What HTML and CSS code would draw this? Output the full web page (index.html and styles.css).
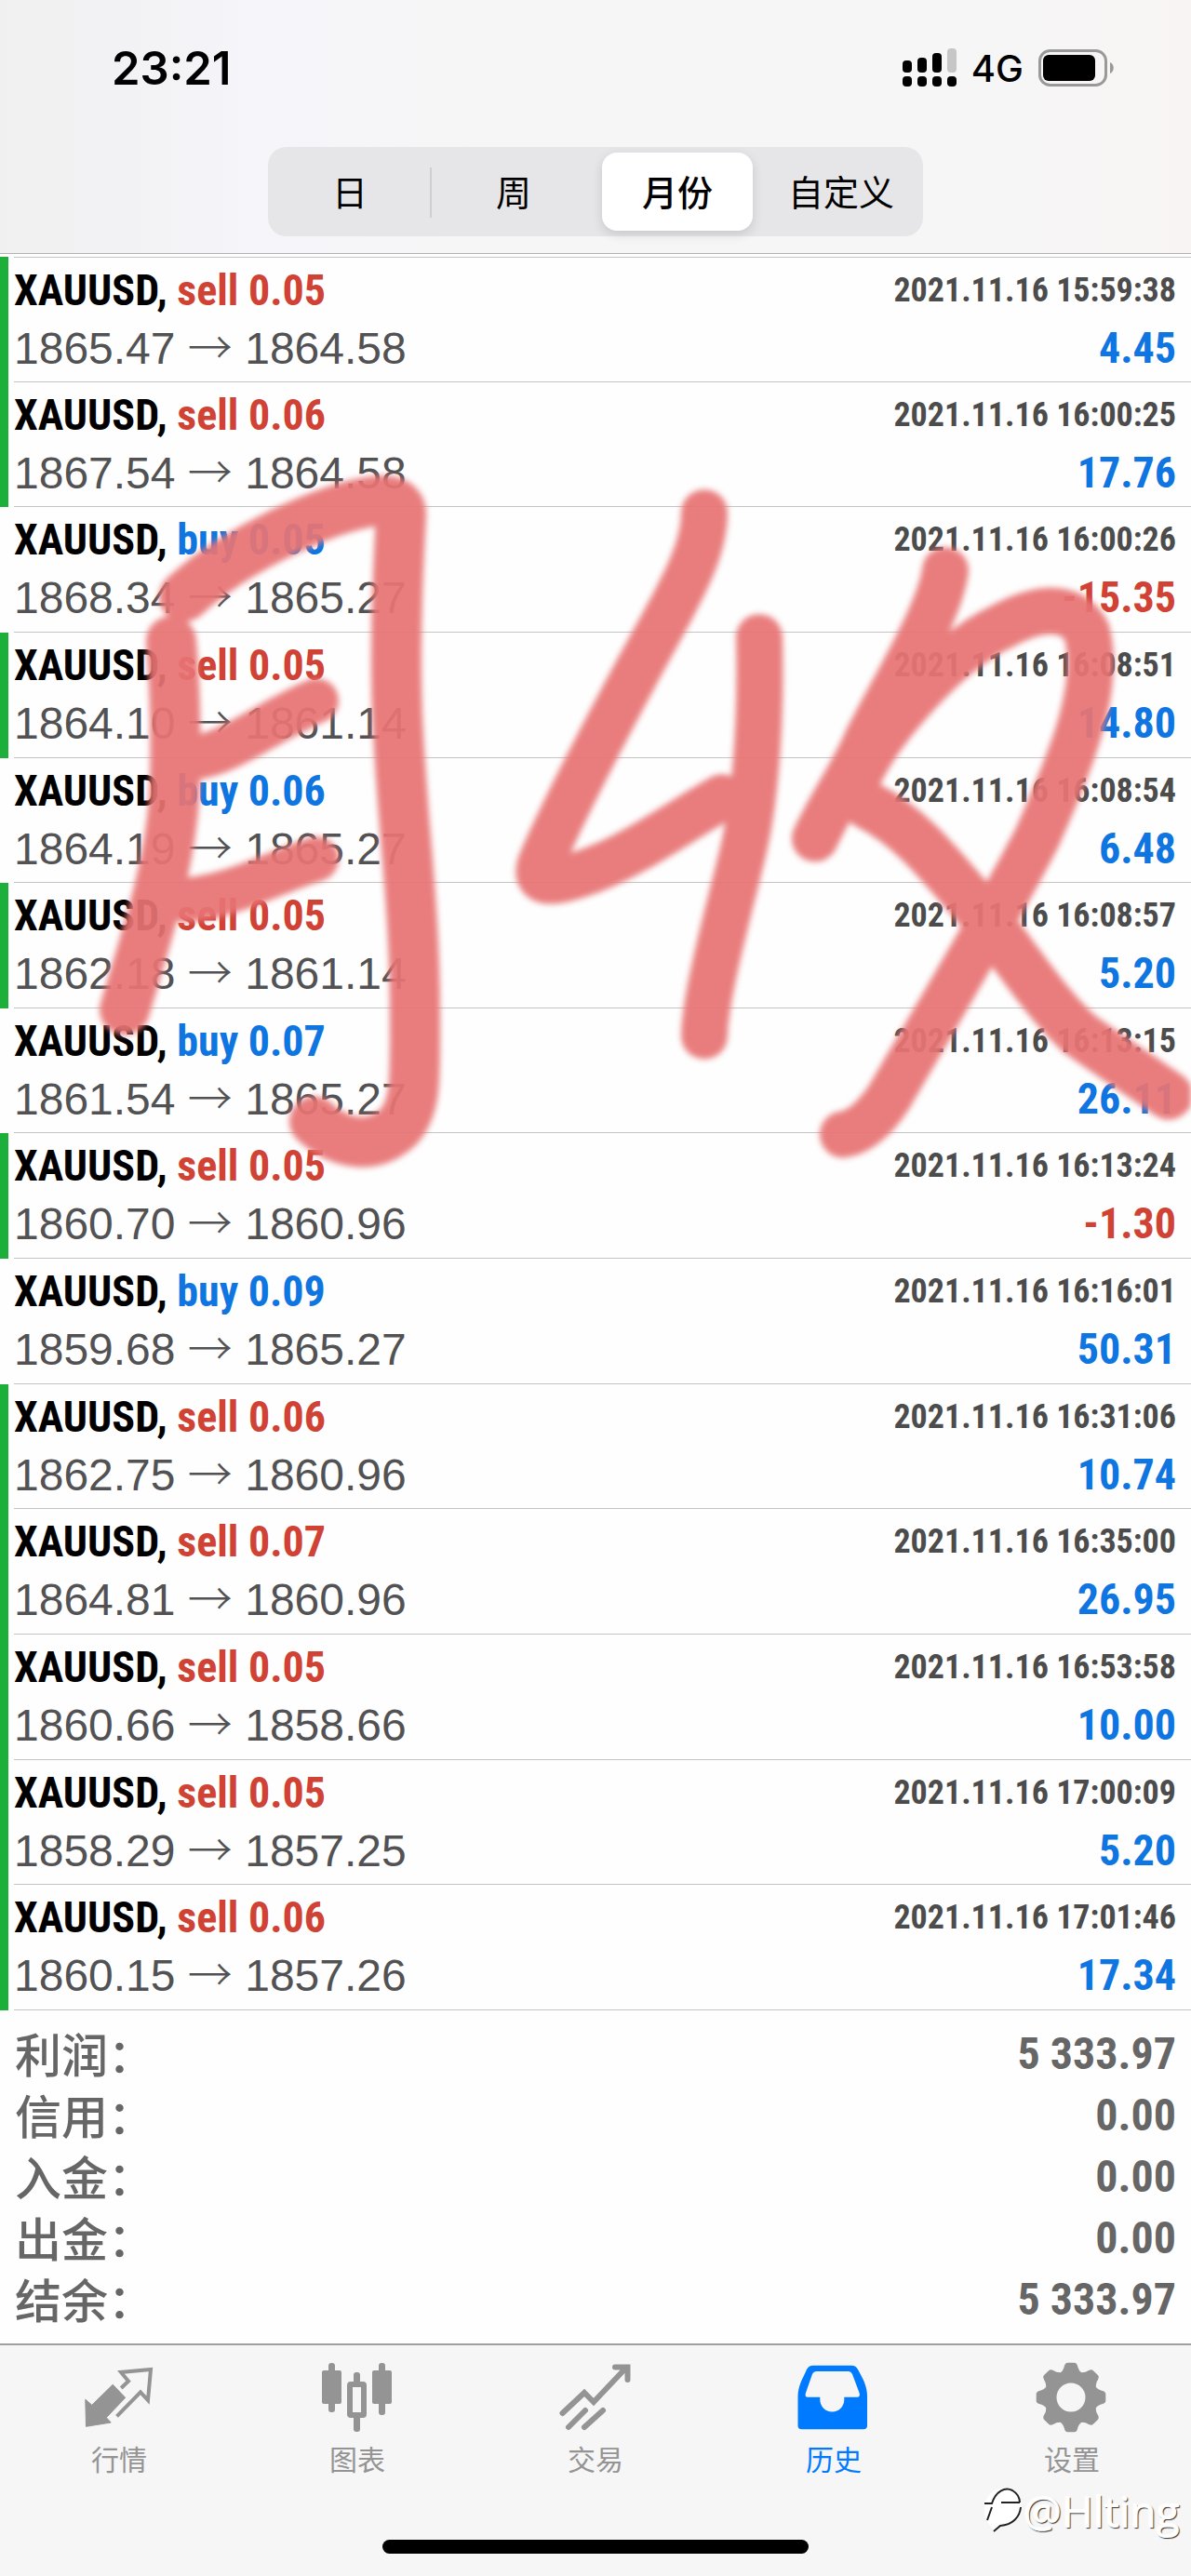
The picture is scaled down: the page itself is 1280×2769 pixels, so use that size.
FILE: index.html
```
<!DOCTYPE html>
<html lang="zh-CN">

<head>
   <meta charset="UTF-8">
   <meta name="viewport" content="width=device-width, initial-scale=1.0">
   <title>历史</title>
   <link rel="stylesheet" href="styles.css">
</head>

<body>
   <header class="top">
      <div class="status-bar">
         <span class="clock">23:21</span>
         <div class="status-icons">
            <svg class="signal" viewBox="0 0 58 42">
               <rect x="0" y="13" width="10" height="13" rx="4" />
               <rect x="16" y="10" width="10" height="16" rx="4" />
               <rect x="32" y="5" width="10" height="21" rx="4" />
               <rect x="48" y="0" width="10" height="26" rx="4" fill="#c6c6c6" />
               <rect x="0" y="30" width="10" height="11" rx="4" />
               <rect x="16" y="30" width="10" height="11" rx="4" />
               <rect x="32" y="30" width="10" height="11" rx="4" />
               <rect x="48" y="30" width="10" height="11" rx="4" />
            </svg>
            <span class="network">4G</span>
            <svg class="battery" viewBox="0 0 82 40">
               <rect x="1.5" y="1.5" width="71" height="37" rx="11" fill="none" stroke="#999" stroke-width="3" />
               <rect x="5" y="6" width="56" height="28" rx="6" />
               <path d="M77 14c5 2 5 10 0 12z" fill="#999" />
            </svg>
         </div>
      </div>
      <nav class="segments">
         <button class="segment" type="button">日</button>
         <button class="segment" type="button">周</button>
         <button class="segment active" type="button">月份</button>
         <button class="segment" type="button">自定义</button>
      </nav>
   </header>

   <main class="history">
      <div class="list-wrap">
         <ul class="trades" id="trades"></ul>
         <svg class="scribble" viewBox="0 277 1280 1884" preserveAspectRatio="none">
            <path d="M184 690C190 760 190 850 184 888C178 940 160 1000 134 1086" />
            <path d="M198 642C245 598 327 558 380 544C420 534 432 540 431 556C426 640 424 720 428 790C434 900 446 980 446 1092C446 1160 448 1190 428 1212C400 1238 364 1230 338 1206" />
            <path d="M208 815C245 812 290 775 340 754" stroke-width="48" />
            <path d="M200 968C250 964 290 940 340 924" stroke-width="48" />
            <path d="M757 552C757 590 735 630 714 669C680 730 610 860 581 929C572 955 600 950 641 934C690 914 730 884 776 858" stroke-width="50" />
            <path d="M816 686C818 760 814 850 799 914C786 970 758 1067 757 1114" stroke-width="50" />
            <path d="M1016 614C1010 660 960 740 932 796C918 830 890 870 876 902" stroke-width="50" />
            <path d="M925 830C950 780 1020 700 1077 674C1110 656 1150 646 1168 680C1184 740 1150 820 1116 898C1080 970 990 1120 956 1179C940 1204 922 1218 906 1220" stroke-width="50" />
            <path d="M932 866C980 890 1010 930 1053 980C1090 1025 1120 1075 1160 1112C1200 1140 1230 1160 1256 1178" stroke-width="52" />
         </svg>
      </div>

      <dl class="summary">
         <div class="total"><dt>利润：</dt><dd>5 333.97</dd></div>
         <div class="total"><dt>信用：</dt><dd>0.00</dd></div>
         <div class="total"><dt>入金：</dt><dd>0.00</dd></div>
         <div class="total"><dt>出金：</dt><dd>0.00</dd></div>
         <div class="total"><dt>结余：</dt><dd>5 333.97</dd></div>
      </dl>
   </main>

   <footer class="bottom">
      <nav class="tabs">
         <a class="tab" href="#quotes">
            <svg viewBox="0 0 80 80">
               <path d="M3.8 43.3L10.8 49.3L33.2 27.3L46.7 41.3L26.3 62.7L31.2 68L4.5 72.3z" stroke="currentColor" stroke-width="1" stroke-linejoin="round" />
               <path d="M42.2 31L50 23.5L42 14L74 11L71 44L63 35.3L37.5 61.3" fill="none" stroke="currentColor" stroke-width="4" />
            </svg>
            <span>行情</span>
         </a>
         <a class="tab" href="#charts">
            <svg viewBox="0 0 80 80">
               <rect x="2" y="12" width="21" height="36" rx="2" />
               <rect x="9" y="4" width="7" height="53" rx="3" />
               <rect x="36" y="14" width="7" height="14" rx="3" />
               <rect x="36" y="60" width="7" height="18" rx="3" />
               <rect x="32" y="27" width="15" height="33" rx="1" fill="none" stroke="currentColor" stroke-width="6" />
               <rect x="56" y="12" width="21" height="36" rx="2" />
               <rect x="63" y="4" width="7" height="56" rx="3" />
            </svg>
            <span>图表</span>
         </a>
         <a class="tab" href="#trade">
            <svg class="outline" viewBox="0 0 80 80">
               <path d="M4.5 58L28 36L38 46L73 9M61 8.5H74.5V22M11 73L29 55M28 73L48 55" />
            </svg>
            <span>交易</span>
         </a>
         <a class="tab current" href="#history">
            <svg viewBox="0 0 80 80">
               <path fill-rule="evenodd" d="M18 6.700H59Q64 6.700 66 11C72 22 76 29 76 40V71Q76 75.300 72 75.300H5.500Q1.500 75.300 1.500 71V40C1.500 29 6 22 11 11Q13 6.700 18 6.700zM21 13Q18.500 13 17 16L10 36Q8.500 40.700 12 40.700H25.300V43.500A13 13 0 0 0 51.300 43.500V40.700H65Q69 40.700 67.500 36L60 16Q58.500 13 56 13z" />
            </svg>
            <span>历史</span>
         </a>
         <a class="tab" href="#settings">
            <svg viewBox="0 0 80 80">
               <defs>
                  <path id="tooth" d="M27 15Q31 12 32 7Q33 3.700 35.500 3.700H42.500Q45 3.700 46 7Q47 12 51 15z" />
               </defs>
               <circle cx="39" cy="41" r="22" fill="none" stroke="currentColor" stroke-width="13" />
               <use href="#tooth" />
               <use href="#tooth" transform="rotate(45 39 41)" />
               <use href="#tooth" transform="rotate(90 39 41)" />
               <use href="#tooth" transform="rotate(135 39 41)" />
               <use href="#tooth" transform="rotate(180 39 41)" />
               <use href="#tooth" transform="rotate(225 39 41)" />
               <use href="#tooth" transform="rotate(270 39 41)" />
               <use href="#tooth" transform="rotate(315 39 41)" />
            </svg>
            <span>设置</span>
         </a>
      </nav>
      <div class="home-bar"></div>
      <div class="watermark">
         <svg viewBox="0 0 46 54">
            <path d="M4 20C8 6 20 0 30 3C42 6 46 18 42 28C38 38 30 42 24 42L16 50C12 44 2 38 4 20z" fill="#fff" />
            <path d="M7 37L12 23M4 19H12C16 6 26 1 34 5C39 8 42 12 42 18M22 18H42M43 23C42 34 34 42 21 43L14 49" fill="none" stroke="#222" stroke-width="2" />
         </svg>
         <span>@Hlting</span>
      </div>
   </footer>

   <script>
      const trades = [
         ["sell", "0.05", "1865.47", "1864.58", "15:59:38", "4.45", true],
         ["sell", "0.06", "1867.54", "1864.58", "16:00:25", "17.76", true],
         ["buy", "0.05", "1868.34", "1865.27", "16:00:26", "-15.35", false],
         ["sell", "0.05", "1864.10", "1861.14", "16:08:51", "14.80", true],
         ["buy", "0.06", "1864.19", "1865.27", "16:08:54", "6.48", false],
         ["sell", "0.05", "1862.18", "1861.14", "16:08:57", "5.20", true],
         ["buy", "0.07", "1861.54", "1865.27", "16:13:15", "26.11", false],
         ["sell", "0.05", "1860.70", "1860.96", "16:13:24", "-1.30", true],
         ["buy", "0.09", "1859.68", "1865.27", "16:16:01", "50.31", false],
         ["sell", "0.06", "1862.75", "1860.96", "16:31:06", "10.74", true],
         ["sell", "0.07", "1864.81", "1860.96", "16:35:00", "26.95", true],
         ["sell", "0.05", "1860.66", "1858.66", "16:53:58", "10.00", true],
         ["sell", "0.05", "1858.29", "1857.25", "17:00:09", "5.20", true],
         ["sell", "0.06", "1860.15", "1857.26", "17:01:46", "17.34", true]
      ];

      const list = document.querySelector("#trades");

      trades.forEach(([side, lots, open, close, time, profit, hit]) => {
         const li = document.createElement("li");
         // green edge marks a position closed by take profit
         li.className = hit ? "trade hit" : "trade";
         li.innerHTML = `
            <div class="trade-body">
               <div class="line">
                  <span class="symbol">XAUUSD, <span class="${side}">${side} ${lots}</span></span>
                  <time class="time">2021.11.16 ${time}</time>
               </div>
               <div class="line">
                  <span class="price">${open} <span class="arrow">→</span> ${close}</span>
                  <span class="profit ${profit.startsWith("-") ? "loss" : ""}">${profit}</span>
               </div>
            </div>`;
         list.appendChild(li);
      });
   </script>
</body>

</html>
```
FILE: styles.css
```
* {
   margin: 0;
   padding: 0;
   box-sizing: border-box;
}

body {
   display: flex;
   flex-direction: column;
   min-height: 100vh;
   background-color: #fefefe;
   font-family: "Liberation Sans", "Noto Sans CJK SC", sans-serif;
}

/* header */
.top {
   display: flex;
   flex-direction: column;
   align-items: center;
   padding-bottom: 18px;
   border-bottom: 1px solid #b2b2b4;
   background: linear-gradient(90deg, #f0f0f0, #f5f5fa 22%, #f6f6f6 40%, #f6f6f6 80%, #f8f4f4);
}

.status-bar {
   display: flex;
   justify-content: space-between;
   align-items: center;
   width: 100%;
   height: 158px;
   padding: 0 82px 12px 120px;
   font-family: Inter, sans-serif;
}

.clock {
   font-size: 49px;
   font-weight: 600;
}

.status-icons {
   display: flex;
   align-items: center;
}

.signal {
   width: 58px;
   height: 42px;
}

.network {
   margin: 0 16px;
   font-size: 40px;
   font-weight: 500;
}

.battery {
   width: 82px;
   height: 40px;
}

.segments {
   display: grid;
   grid-template-columns: repeat(4, 1fr);
   width: 55%;
   height: 96px;
   padding: 6px 0;
   border-radius: 20px;
   background-color: #e6e6e8;
}

.segment {
   position: relative;
   padding-bottom: 4px;
   border: 0;
   border-radius: 16px;
   background: none;
   color: #000;
   font-family: "Noto Sans CJK SC", sans-serif;
   font-size: 38px;
   white-space: nowrap;
}

.segment:first-child::after {
   content: "";
   position: absolute;
   right: 0;
   top: 16px;
   width: 2px;
   height: 54px;
   background-color: #cfcfd2;
}

.segment.active {
   margin: 0 7px;
   background-color: #fff;
   box-shadow: 0 4px 12px #0002;
   font-weight: 500;
}

/* trades */
.history {
   display: flex;
   flex: 1;
   flex-direction: column;
   padding-top: 3px;
}

.list-wrap {
   position: relative;
   display: flex;
   flex: 1;
}

.trades {
   display: flex;
   flex: 1;
   flex-direction: column;
   list-style: none;
}

.trade {
   display: flex;
   flex: 1;
   padding-left: 6px;
   border-left: 9px solid transparent;
}

.trade.hit {
   border-left-color: #1cb03a;
}

.trade-body {
   flex: 1;
   padding: 4px 16px 4px 0;
   border-bottom: 1px solid #c4c4c4;
}

.trade:first-child .trade-body {
   border-top: 1px solid #c4c4c4;
}

.line {
   display: flex;
   justify-content: space-between;
   align-items: center;
   height: 62px;
   white-space: nowrap;
}

.symbol,
.time,
.profit,
.total dd {
   font-family: "Roboto Condensed", Roboto, sans-serif;
   font-weight: bold;
}

.symbol {
   font-size: 46px;
}

.sell,
.loss {
   color: #cf4234;
}

.buy {
   color: #0f75e0;
}

.time {
   color: #4c4c4c;
   font-size: 36px;
}

.price {
   color: #525254;
   font-size: 48px;
}

.arrow {
   font-family: "Noto Sans CJK SC", sans-serif;
   font-weight: 300;
   line-height: 1;
}

.profit {
   color: #0f75e0;
   font-size: 46px;
}

.profit.loss {
   color: #cf4234;
}

.scribble {
   position: absolute;
   inset: 0;
   width: 100%;
   height: 100%;
   overflow: hidden;
   fill: none;
   stroke: #e87474;
   stroke-width: 54px;
   stroke-linecap: round;
   stroke-linejoin: round;
   opacity: 0.93;
   filter: blur(3px);
   pointer-events: none;
}

/* totals */
.summary {
   padding: 14px 16px;
}

.total {
   display: flex;
   justify-content: space-between;
   height: 66px;
   color: #666;
   line-height: 66px;
}

.total dt {
   font-family: "Noto Sans CJK SC", sans-serif;
   font-size: 50px;
   font-weight: 500;
   line-height: 62px;
}

.total dd {
   font-size: 48px;
}

/* tab bar */
.bottom {
   position: relative;
   display: flex;
   flex-direction: column;
   align-items: center;
   height: 250px;
   padding-bottom: 24px;
   border-top: 2px solid #a0a0a0;
   background-color: #f6f6f6;
}

.tabs {
   display: flex;
   flex: 1;
   width: 100%;
   padding-top: 15px;
}

.tab {
   display: flex;
   flex: 1;
   flex-direction: column;
   align-items: center;
   gap: 4px;
   color: #949494;
   font-family: "Noto Sans CJK SC", sans-serif;
   font-size: 30px;
   line-height: 44px;
   text-decoration: none;
}

.tab svg {
   width: 80px;
   height: 80px;
   fill: currentColor;
}

.tab svg.outline {
   fill: none;
   stroke: currentColor;
   stroke-width: 6px;
   stroke-linecap: round;
}

.tab.current {
   color: #007aff;
}

.home-bar {
   width: 458px;
   height: 15px;
   border-radius: 8px;
   background-color: #000;
}

.watermark {
   position: absolute;
   right: 12px;
   bottom: 38px;
   display: flex;
   align-items: center;
   color: #fff;
   font-family: "Open Sans", sans-serif;
   font-size: 46px;
   line-height: 64px;
   text-shadow: -1px -1px 1px #fff, 1px 1px 1px #333;
}

.watermark svg {
   width: 46px;
   height: 54px;
}
```
